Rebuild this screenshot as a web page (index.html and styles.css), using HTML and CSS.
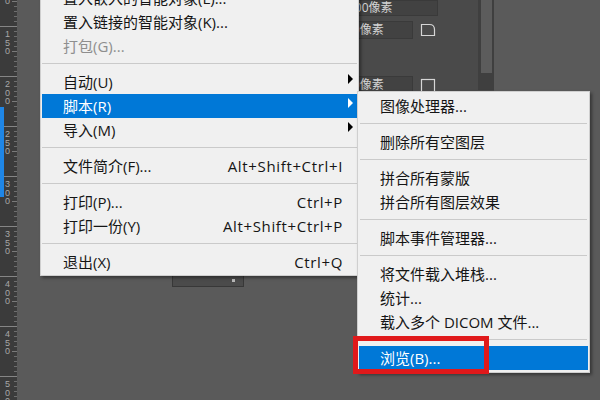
FILE: index.html
```html
<!DOCTYPE html>
<html lang="zh-CN">
<head>
<meta charset="utf-8">
<title>脚本菜单</title>
<link rel="stylesheet" href="styles.css">
</head>
<body>
<div class="app">
  <aside class="ruler">
    <div class="ruler-seg"><div class="digits"><span>1</span><span>0</span><span>0</span></div><div class="ticks"></div></div>
    <div class="ruler-seg"><div class="digits"><span>1</span><span>5</span><span>0</span></div><div class="ticks"></div></div>
    <div class="ruler-seg"><div class="digits"><span>2</span><span>0</span><span>0</span></div><div class="ticks"></div></div>
    <div class="ruler-seg"><div class="digits"><span>2</span><span>5</span><span>0</span></div><div class="ticks"></div></div>
    <div class="ruler-seg"><div class="digits"><span>3</span><span>0</span><span>0</span></div><div class="ticks"></div></div>
    <div class="ruler-seg"><div class="digits"><span>3</span><span>5</span><span>0</span></div><div class="ticks"></div></div>
    <div class="ruler-seg"><div class="digits"><span>4</span><span>0</span><span>0</span></div><div class="ticks"></div></div>
    <div class="ruler-seg"><div class="digits"><span>4</span><span>5</span><span>0</span></div><div class="ticks"></div></div>
    <div class="ruler-seg"><div class="digits"><span>5</span><span>0</span><span>0</span></div><div class="ticks"></div></div>
    <div class="ruler-mark"></div>
  </aside>

  <main class="canvas">
    <section class="props">
      <div class="props-body">
        <div class="field field-top">100像素</div>
        <div class="prop-row row2">
          <div class="field">10像素</div>
          <svg class="icon" width="16" height="14" viewBox="0 0 16 14"><path d="M1.5 1.5 H9.5 Q14.5 1.5 14.5 6.5 V12.5 H1.5 Z" fill="none" stroke="#d6d6d6" stroke-width="1.2"/></svg>
        </div>
        <div class="prop-row row3">
          <div class="field field-low">10像素</div>
          <svg class="icon" width="16" height="14" viewBox="0 0 16 14"><rect x="1.5" y="1.5" width="13" height="13" fill="none" stroke="#d6d6d6" stroke-width="1.2"/></svg>
        </div>
      </div>
      <div class="scroll"><div class="thumb"></div></div>
    </section>

    <div class="minibox"><span class="mini-bar"></span><span class="mini-dot"></span></div>

    <ul class="menu menu-main">
      <li class="item"><span class="label">置入嵌入的智能对象(L)...</span><span class="key"></span><span class="arrow"></span></li>
      <li class="item"><span class="label">置入链接的智能对象(K)...</span><span class="key"></span><span class="arrow"></span></li>
      <li class="item disabled"><span class="label">打包(G)...</span><span class="key"></span><span class="arrow"></span></li>
      <li class="sep"></li>
      <li class="item"><span class="label">自动(U)</span><span class="key"></span><span class="arrow has-sub"></span></li>
      <li class="item active"><span class="label">脚本(R)</span><span class="key"></span><span class="arrow has-sub"></span></li>
      <li class="item"><span class="label">导入(M)</span><span class="key"></span><span class="arrow has-sub"></span></li>
      <li class="sep"></li>
      <li class="item"><span class="label">文件简介(F)...</span><span class="key">Alt+Shift+Ctrl+I</span><span class="arrow"></span></li>
      <li class="sep"></li>
      <li class="item"><span class="label">打印(P)...</span><span class="key">Ctrl+P</span><span class="arrow"></span></li>
      <li class="item"><span class="label">打印一份(Y)</span><span class="key">Alt+Shift+Ctrl+P</span><span class="arrow"></span></li>
      <li class="sep"></li>
      <li class="item"><span class="label">退出(X)</span><span class="key">Ctrl+Q</span><span class="arrow"></span></li>
    </ul>

    <ul class="menu menu-sub">
      <li class="item"><span class="label">图像处理器...</span><span class="key"></span><span class="arrow"></span></li>
      <li class="sep"></li>
      <li class="item"><span class="label">删除所有空图层</span><span class="key"></span><span class="arrow"></span></li>
      <li class="sep"></li>
      <li class="item"><span class="label">拼合所有蒙版</span><span class="key"></span><span class="arrow"></span></li>
      <li class="item"><span class="label">拼合所有图层效果</span><span class="key"></span><span class="arrow"></span></li>
      <li class="sep"></li>
      <li class="item"><span class="label">脚本事件管理器...</span><span class="key"></span><span class="arrow"></span></li>
      <li class="sep"></li>
      <li class="item"><span class="label">将文件载入堆栈...</span><span class="key"></span><span class="arrow"></span></li>
      <li class="item"><span class="label">统计...</span><span class="key"></span><span class="arrow"></span></li>
      <li class="item"><span class="label">载入多个 DICOM 文件...</span><span class="key"></span><span class="arrow"></span></li>
      <li class="sep"></li>
      <li class="item active"><span class="label">浏览(B)...</span><span class="key"></span><span class="arrow"></span></li>
    </ul>

    <div class="callout"></div>
  </main>
</div>
</body>
</html>
```

FILE: styles.css
```css
* { box-sizing: border-box; margin: 0; padding: 0; }

html, body { width: 600px; height: 400px; overflow: hidden; }

body {
  background: #5a5a5a;
  font-family: "Open Sans", "Noto Sans CJK SC", sans-serif;
}

.app {
  display: grid;
  grid-template-columns: 17px 1fr;
  height: 400px;
}

/* ---------- ruler ---------- */
.ruler {
  position: relative;
  background: #3b3b3b;
  overflow: hidden;
  display: flex;
  flex-direction: column;
}

.ruler-seg {
  flex: 0 0 50px;
  display: grid;
  grid-template-columns: 12px 5px;
  border-top: 1px solid #858585;
}

.ruler-seg:first-child { margin-top: -24px; }

.digits {
  display: flex;
  flex-direction: column;
  padding: 3px 0 0 5px;
  font: 9px/8.5px "Liberation Sans", sans-serif;
  color: #a8a8a8;
}

.ticks {
  background:
    linear-gradient(to bottom, transparent 0 24px, #7a7a7a 24px 25px, transparent 25px) left top / 5px 50px no-repeat,
    repeating-linear-gradient(to bottom, transparent 0 4px, #6e6e6e 4px 5px) right top / 3px 100% no-repeat;
}

.ruler-mark {
  position: absolute;
  left: 0;
  top: 107px;
  width: 4px;
  height: 90px;
  background: #1f86e6;
}

/* ---------- canvas ---------- */
.canvas { position: relative; }

.props {
  position: absolute;
  left: 313px;
  top: 0;
  width: 164px;
  height: 92px;
  background: #4a4a4a;
  display: grid;
  grid-template-columns: 148px 16px;
}

.props-body { display: flex; flex-direction: column; }

.field {
  width: 83px;
  height: 18px;
  background: #424242;
  border: 1px solid #3a3a3a;
  color: #d4d4d4;
  font-size: 12px;
  line-height: 16px;
  padding-left: 15px;
  white-space: nowrap;
  overflow: hidden;
}

.field-top {
  width: 108px;
  height: 16px;
  line-height: 14px;
  padding-left: 17px;
}

.field-low { height: 16px; line-height: 15px; }

.prop-row { display: flex; align-items: center; gap: 7px; }
.row2 { margin-top: 5px; }
.row3 { margin-top: 37px; align-items: flex-start; }
.row3 .icon { margin-top: 2px; }

.icon { display: block; flex: none; }

.scroll {
  background: #3f3f3f;
  height: 90px;
  padding: 0 2px 0 3px;
}

.thumb { height: 73px; background: #5c5c5c; }

.minibox {
  position: absolute;
  left: 155px;
  top: 266px;
  width: 72px;
  height: 21px;
  background: #4b4b4b;
  border: 1px solid #383838;
  display: flex;
  align-items: flex-start;
  padding: 7px 0 0 40px;
}

.mini-bar { width: 14px; height: 2px; background: #9a9a9a; }
.mini-dot { width: 3px; height: 3px; background: #b8b8b8; margin: 5px 0 0 5px; }

/* ---------- menus ---------- */
.menu {
  position: absolute;
  list-style: none;
  background: #f0f0f0;
  border: 1px solid #cfcfcf;
  padding: 2px 1px;
  box-shadow: 2px 2px 3px rgba(0, 0, 0, 0.4);
  font-size: 15px;
  color: #151515;
}

.menu-main {
  left: 23px;
  top: -17px;
  width: 319px;
  padding-bottom: 1px;
}

.menu-sub {
  left: 340px;
  top: 91px;
  width: 233px;
}

.item {
  display: grid;
  grid-template-columns: 1fr auto 14px;
  align-items: center;
  height: 24px;
  line-height: 24px;
  padding-left: 21px;
  white-space: nowrap;
}

.key { letter-spacing: 0.65px; }

.item.active { background: #0078d7; color: #fff; }
.item.disabled { color: #8e8e8e; }

.has-sub::before {
  content: "";
  display: block;
  width: 0;
  height: 0;
  margin-left: 5px;
  border-left: 5px solid #000;
  border-top: 5px solid transparent;
  border-bottom: 5px solid transparent;
  transform: translateY(-3px);
}

.item.active .has-sub::before { border-left-color: #fff; }

.sep { height: 12px; padding-top: 5px; }
.sep::before { content: ""; display: block; border-top: 1px solid #cacaca; }
.menu-sub .sep { margin: 0 1px; }

.callout {
  position: absolute;
  left: 336px;
  top: 336px;
  width: 136px;
  height: 38px;
  border: 5px solid #e0191b;
}
```
